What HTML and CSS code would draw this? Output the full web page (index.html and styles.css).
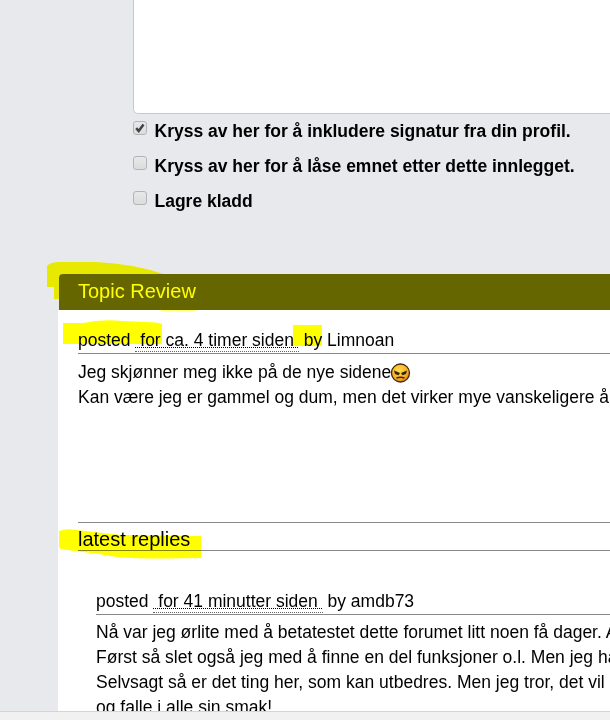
FILE: index.html
```html
<!DOCTYPE html>
<html lang="no">
<head>
<meta charset="utf-8">
<title>Topic Review</title>
<link rel="stylesheet" href="styles.css">
</head>
<body>
<div class="viewport">
  <form class="options">
    <div class="editor"></div>
    <label class="option"><span class="box"><svg viewBox="0 0 14 14"><path d="M3.2 7.2 5.7 10 10.5 3.4" fill="none" stroke="#404144" stroke-width="2.5"/></svg></span><span>Kryss av her for å inkludere signatur fra din profil.</span></label>
    <label class="option"><span class="box"></span><span>Kryss av her for å låse emnet etter dette innlegget.</span></label>
    <label class="option"><span class="box"></span><span>Lagre kladd</span></label>
  </form>
  <section class="review">
    <h2 class="review-title">Topic Review</h2>
    <div class="review-body">
      <div class="meta">posted <abbr class="time">&nbsp;for ca. 4 timer siden&nbsp;</abbr> by Limnoan</div>
      <div class="message first">Jeg skjønner meg ikke på de nye sidene<svg class="emoji" viewBox="0 0 20 20"><defs><radialGradient id="face" cx="42%" cy="35%" r="70%"><stop offset="0" stop-color="#ffdc45"/><stop offset=".65" stop-color="#f9b024"/><stop offset="1" stop-color="#d87a10"/></radialGradient></defs><circle cx="9.5" cy="10" r="9" fill="url(#face)" stroke="#412b12" stroke-width="1.3"/><path d="M3 7.500 9 10 7.500 12.200 4 11ZM16 7.500 10 10 11.500 12.200 15 11Z" fill="#322415"/><path d="M5.500 15Q9.500 13.500 13.500 15" fill="none" stroke="#49240e" stroke-width="1.600"/></svg><br>Kan være jeg er gammel og dum, men det virker mye vanskeligere å</div>
      <h3 class="replies-title">latest replies</h3>
      <article class="reply">
        <div class="meta">posted <abbr class="time">&nbsp;for 41 minutter siden&nbsp;</abbr> by amdb73</div>
        <div class="message">Nå var jeg ørlite med å betatestet dette forumet litt noen få dager. A<br>Først så slet også jeg med å finne en del funksjoner o.l. Men jeg har<br>Selvsagt så er det ting her, som kan utbedres. Men jeg tror, det vil<br>og falle i alle sin smak!</div>
      </article>
    </div>
  </section>
  <svg class="marker" viewBox="0 0 610 720">
    <path d="M47 287V266Q50 262 60 262H96Q135 264 163 274H65Q59 274 59 279V299H54V287Z"/>
    <path fill="#ffff72" d="M160 310H197L194 311H162Z"/>
    <path d="M63 323 83 323Q102 319 122 321L146 322Q158 322 162 324V344H63Z"/>
    <path d="M293 325H322V346H293Z"/>
    <path d="M59 531Q67 528 76 530L121 535 201 536V558L164 558.500Q120 559 99 554L67 550Q59 550 59 546Z"/>
  </svg>
  <div class="scrollbar"></div>
</div>
</body>
</html>
```
FILE: styles.css
```css
* { box-sizing: border-box; }
body {
  margin: 0;
  background: #e8e9ed;
  color: #000;
  font: 17.5px/25px "Liberation Sans", Arial, sans-serif;
}
.viewport {
  position: relative;
  height: 720px;
  overflow: hidden;
  display: flex;
  flex-direction: column;
}
.options { flex: none; height: 274px; padding-left: 133px; }
.editor {
  height: 114px;
  margin-right: -10px;
  background: #fff;
  border: 1px solid #c8c8ca;
  border-top: 0;
  border-bottom-left-radius: 5px;
}
.option {
  display: flex;
  align-items: flex-start;
  gap: 7.5px;
  height: 35px;
  padding-top: 5px;
  font-weight: bold;
  white-space: nowrap;
}
.box {
  width: 14px;
  height: 14px;
  margin-top: 2px;
  border: 1px solid #b4b5b6;
  border-radius: 3px;
  background: linear-gradient(#e8e8e8, #dcdcdc);
}
.box svg { display: block; width: 14px; height: 14px; margin: -1px; }
.review {
  flex: none;
  height: 437px;
  margin-left: 58px;
  overflow: hidden;
  white-space: nowrap;
}
.review-title {
  height: 36px;
  margin: 0 0 0 1px;
  padding-left: 19px;
  background: #660;
  color: #ff0;
  border-top-left-radius: 4px;
  font-size: 20px;
  font-weight: normal;
  line-height: 34px;
}
.review-body { height: 420px; padding: 17px 0 0 20px; background: #fff; }
.meta { height: 27px; padding-top: 1px; border-bottom: 1px solid #888; }
.time {
  display: inline-block;
  height: 24px;
  border-bottom: 1px dotted #666;
  text-decoration: underline dotted #000 1px;
  text-underline-offset: 1px;
  text-decoration-skip-ink: none;
}
.message { padding-top: 5px; }
.message.first { height: 168px; padding-top: 6px; }
.emoji { width: 20px; height: 20px; margin-bottom: -5px; vertical-align: baseline; }
.replies-title {
  height: 29px;
  margin: 0;
  border-top: 1px solid #888;
  border-bottom: 1px solid #888;
  font-size: 20px;
  font-weight: normal;
  line-height: 33px;
}
.reply { padding: 37px 0 0 18px; }
.scrollbar {
  flex: none;
  height: 9px;
  background: #f1f1f1;
  border-top: 1px solid #d4d4d5;
}
.marker {
  position: absolute;
  inset: 0;
  width: 610px;
  height: 720px;
  fill: #ff0;
  mix-blend-mode: multiply;
  pointer-events: none;
}
```
